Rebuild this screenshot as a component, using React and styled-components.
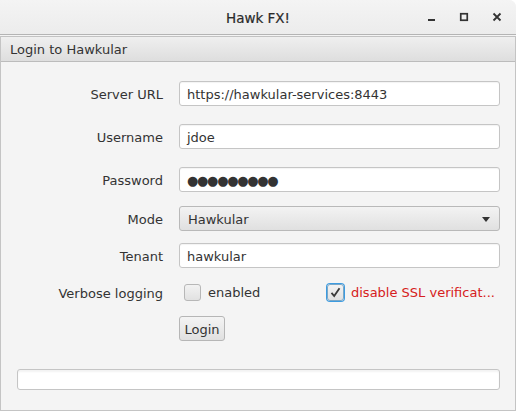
import React from "react";
import styled, { createGlobalStyle } from "styled-components";

const GlobalStyle = createGlobalStyle`
  body {
    margin: 0;
    background: #ffffff;
    font-family: "DejaVu Sans", "Liberation Sans", sans-serif;
    font-size: 13px;
    color: #333333;
  }
`;

const Window = styled.div`
  width: 516px;
  height: 411px;
  display: flex;
  flex-direction: column;
  background: #f4f4f4;
  border-top-right-radius: 7px;
  overflow: hidden;
`;

const TitleBar = styled.div`
  height: 34px;
  display: grid;
  grid-template-columns: 1fr auto 1fr;
  align-items: center;
  background: linear-gradient(#f4f4f4, #ececec);
  border-bottom: 1px solid #b4b4b4;
`;

const Title = styled.div`
  grid-column: 2;
  font-size: 13.5px;
  color: #2a2a2a;
  padding-top: 1px;
  -webkit-text-stroke: 0.2px #2a2a2a;
`;

const WinButtons = styled.div`
  justify-self: end;
  display: flex;
  align-items: center;
  gap: 12px;
  padding-right: 9px;
`;

const WinButton = styled.div`
  width: 21px;
  height: 21px;
  display: flex;
  align-items: center;
  justify-content: center;
`;

const Panel = styled.div`
  flex: 1;
  margin-top: 1px;
  display: flex;
  flex-direction: column;
  border: 1px solid #c4c4c4;
  border-top: none;
`;

const PanelHeader = styled.div`
  height: 24px;
  display: flex;
  align-items: center;
  padding-left: 9px;
  background: linear-gradient(#efefef, #dedede);
  border-top: 1px solid #c2c2c2;
  border-bottom: 1px solid #bcbcbc;
  color: #333;
`;

const Content = styled.div`
  display: flex;
  flex-direction: column;
  padding: 19px 15px 0 0;
`;

const Row = styled.div`
  display: grid;
  grid-template-columns: 162px 321px;
  column-gap: 16px;
  align-items: center;
  margin-top: ${({ $mt }) => $mt}px;
`;

const Label = styled.div`
  text-align: right;
  color: #333;
  padding-top: 1px;
`;

const TextField = styled.div`
  height: 23px;
  display: flex;
  align-items: center;
  padding: 1px 7px 0;
  box-sizing: border-box;
  height: 25px;
  background: #ffffff;
  border: 1px solid #c5c5c5;
  border-radius: 3px;
  box-shadow: inset 0 1px 1px rgba(0, 0, 0, 0.05);
  color: #333;
  white-space: nowrap;
`;

const Dots = styled.span`
  font-size: 13px;
  letter-spacing: -1.3px;
  color: #333;
`;

const Combo = styled.div`
  height: 25px;
  box-sizing: border-box;
  display: flex;
  align-items: center;
  justify-content: space-between;
  padding: 1px 9px 0 8px;
  background: linear-gradient(#f3f3f3, #e0e0e0);
  border: 1px solid #b9b9b9;
  border-radius: 3px;
  color: #333;
`;

const Checks = styled.div`
  display: flex;
  align-items: center;
  height: 25px;
  padding-left: 5px;
`;

const CheckItem = styled.label`
  display: flex;
  align-items: center;
  gap: 7px;
  width: ${({ $w }) => $w}px;
  color: ${({ $danger }) => ($danger ? "#d62020" : "#333")};
  white-space: nowrap;
`;

const Box = styled.span`
  width: 15px;
  height: 15px;
  display: flex;
  align-items: center;
  justify-content: center;
  background: linear-gradient(#f2f2f2, #e1e1e1);
  border: 1px solid ${({ $focus }) => ($focus ? "#7aa7c7" : "#b7b7b7")};
  border-radius: 3px;
  box-shadow: ${({ $focus }) => ($focus ? "0 0 0 1px #3c9be0" : "none")};
`;

const Button = styled.div`
  width: 44px;
  height: 23px;
  display: flex;
  align-items: center;
  justify-content: center;
  padding-top: 1px;
  box-sizing: border-box;
  height: 25px;
  width: 46px;
  background: linear-gradient(#f4f4f4, #e0e0e0);
  border: 1px solid #b6b6b6;
  border-radius: 3px;
  color: #333;
`;

const StatusField = styled.div`
  margin: 28px 0 0 16px;
  width: 481px;
  height: 19px;
  background: #ffffff;
  border: 1px solid #c5c5c5;
  border-radius: 3px;
  box-shadow: inset 0 2px 2px rgba(0, 0, 0, 0.05);
`;

function CheckBox({ checked, focus, label, danger, width }) {
  return (
    <CheckItem $danger={danger} $w={width}>
      <Box $focus={focus}>
        {checked && (
          <svg width="13" height="13" viewBox="0 0 13 13">
            <path d="M2.5 6.8 L5.2 10 L10.5 2.2" fill="none" stroke="#3a3a3a" strokeWidth="1.8" />
          </svg>
        )}
      </Box>
      {label}
    </CheckItem>
  );
}

export default function App() {
  return (
    <>
      <GlobalStyle />
      <Window>
        <TitleBar>
          <Title>Hawk FX!</Title>
          <WinButtons>
            <WinButton>
              <svg width="10" height="10" viewBox="0 0 10 10">
                <rect x="2" y="7" width="7" height="2" fill="#333" />
              </svg>
            </WinButton>
            <WinButton>
              <svg width="10" height="10" viewBox="0 0 10 10">
                <rect x="1.75" y="1.75" width="6.5" height="6.5" fill="none" stroke="#333" strokeWidth="1.7" />
              </svg>
            </WinButton>
            <WinButton>
              <svg width="10" height="10" viewBox="0 0 10 10">
                <path d="M1.5 1.5 L8.5 8.5 M8.5 1.5 L1.5 8.5" stroke="#333" strokeWidth="1.8" />
              </svg>
            </WinButton>
          </WinButtons>
        </TitleBar>
        <Panel>
          <PanelHeader>Login to Hawkular</PanelHeader>
          <Content>
            <Row $mt={0}>
              <Label>Server URL</Label>
              <TextField>https://hawkular-services:8443</TextField>
            </Row>
            <Row $mt={18}>
              <Label>Username</Label>
              <TextField>jdoe</TextField>
            </Row>
            <Row $mt={18}>
              <Label>Password</Label>
              <TextField>
                <Dots>●●●●●●●●●</Dots>
              </TextField>
            </Row>
            <Row $mt={14}>
              <Label>Mode</Label>
              <Combo>
                Hawkular
                <svg width="8" height="5" viewBox="0 0 8 5">
                  <path d="M0 0 L8 0 L4 5 Z" fill="#333" />
                </svg>
              </Combo>
            </Row>
            <Row $mt={12}>
              <Label>Tenant</Label>
              <TextField>hawkular</TextField>
            </Row>
            <Row $mt={12}>
              <Label>Verbose logging</Label>
              <Checks>
                <CheckBox label="enabled" width={143} />
                <CheckBox checked focus danger label="disable SSL verificat..." />
              </Checks>
            </Row>
            <Row $mt={11}>
              <span />
              <div>
                <Button>Login</Button>
              </div>
            </Row>
          </Content>
          <StatusField />
        </Panel>
      </Window>
    </>
  );
}
